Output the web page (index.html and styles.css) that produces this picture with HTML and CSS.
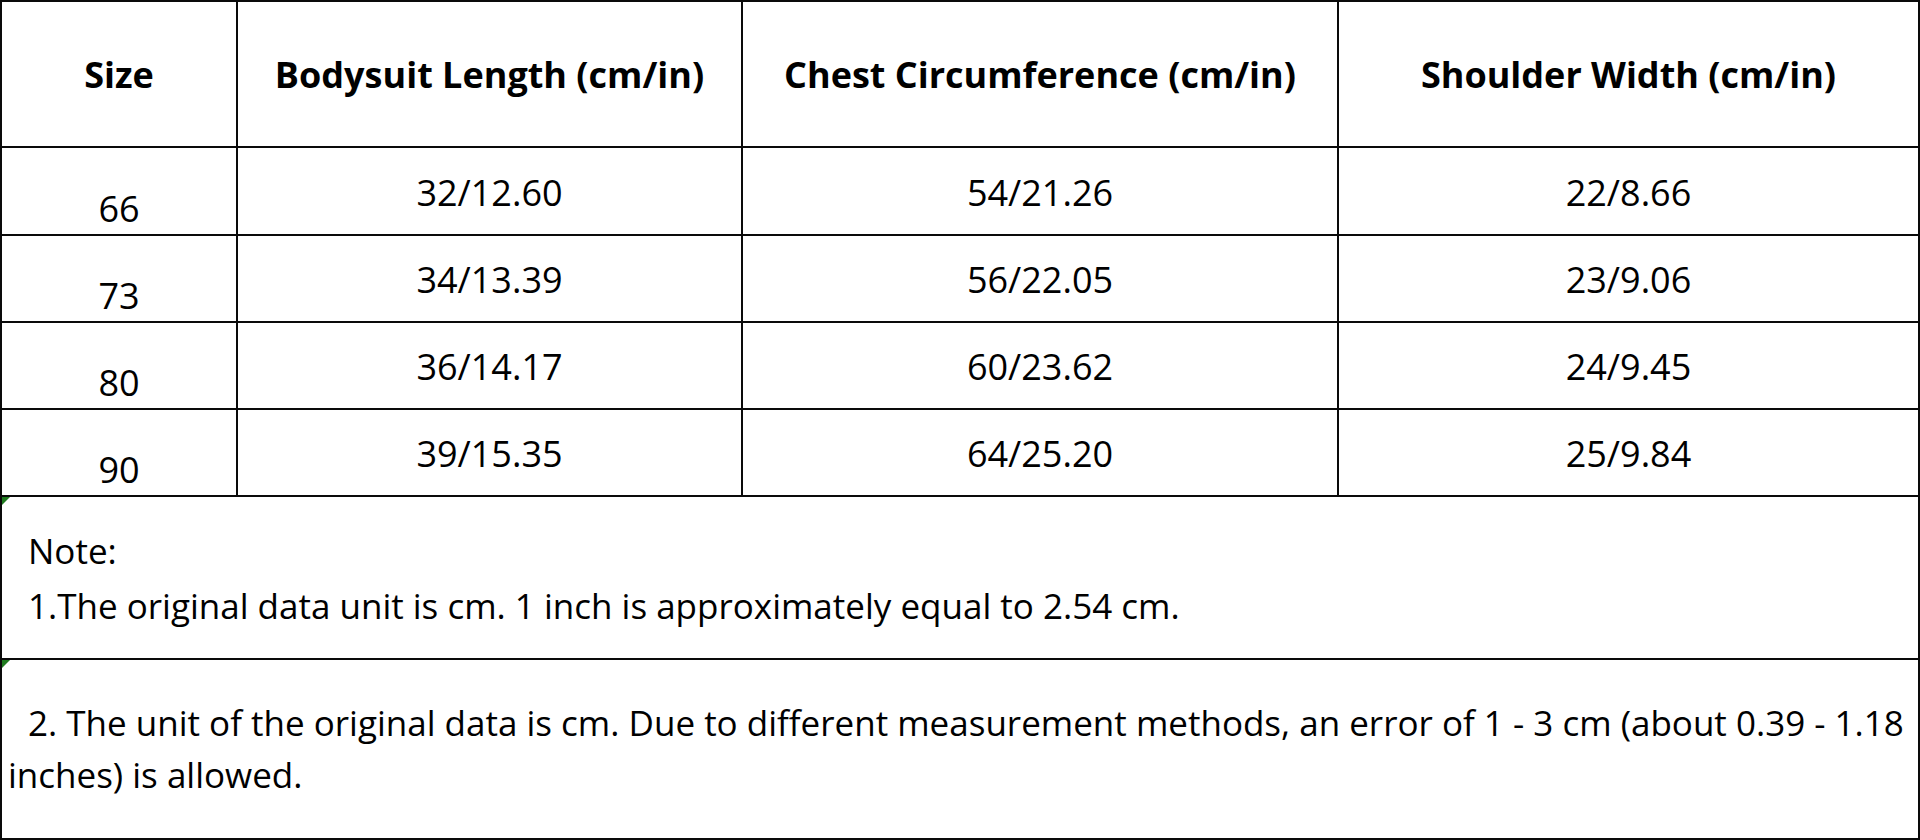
FILE: index.html
```html
<!DOCTYPE html>
<html lang="en">
<head>
<meta charset="utf-8">
<title>Size Chart</title>
<link rel="stylesheet" href="styles.css">
</head>
<body>
<div class="chart">
  <div class="cell head">Size</div>
  <div class="cell head">Bodysuit Length (cm/in)</div>
  <div class="cell head">Chest Circumference (cm/in)</div>
  <div class="cell head">Shoulder Width (cm/in)</div>

  <div class="cell size">66</div>
  <div class="cell val">32/12.60</div>
  <div class="cell val">54/21.26</div>
  <div class="cell val">22/8.66</div>

  <div class="cell size">73</div>
  <div class="cell val">34/13.39</div>
  <div class="cell val">56/22.05</div>
  <div class="cell val">23/9.06</div>

  <div class="cell size">80</div>
  <div class="cell val">36/14.17</div>
  <div class="cell val">60/23.62</div>
  <div class="cell val">24/9.45</div>

  <div class="cell size">90</div>
  <div class="cell val">39/15.35</div>
  <div class="cell val">64/25.20</div>
  <div class="cell val">25/9.84</div>

  <div class="cell note note-one">
    <p class="note-line">Note:</p>
    <p class="note-line">1.The original data unit is cm. 1 inch is approximately equal to 2.54 cm.</p>
  </div>
  <div class="cell note note-two">
    <p class="note-text">2. The unit of the original data is cm. Due to different measurement methods, an error of 1 - 3 cm (about 0.39 - 1.18<br>inches) is allowed.</p>
  </div>
</div>
</body>
</html>
```
FILE: styles.css
```css
html, body {
  margin: 0;
  padding: 0;
  background: #ffffff;
}

body {
  width: 1920px;
  height: 840px;
  overflow: hidden;
  font-family: "Open Sans", "Noto Sans", "DejaVu Sans", sans-serif;
  color: #000000;
}

.chart {
  box-sizing: border-box;
  width: 1920px;
  height: 840px;
  padding: 2px;
  display: grid;
  grid-template-columns: 234px 503px 594px 1fr;
  grid-template-rows: 144px 86px 85px 85px 85px 161px 178px;
  gap: 2px;
  background: #0a0a0a;
}

.cell {
  background: #ffffff;
  display: flex;
  justify-content: center;
  align-items: center;
  position: relative;
}

.head {
  font-weight: 700;
  font-size: 36px;
}

.val {
  font-size: 36px;
  padding-top: 2px;
}

.size {
  font-size: 36px;
  align-items: flex-end;
  padding-bottom: 1px;
}

.note {
  grid-column: 1 / -1;
  flex-direction: column;
  justify-content: center;
  align-items: stretch;
}

.note::before {
  content: "";
  position: absolute;
  left: 0;
  top: 0;
  width: 0;
  height: 0;
  border-top: 8px solid #1f7a1f;
  border-right: 8px solid transparent;
}

.note-one {
  padding-left: 26px;
  font-size: 35px;
}

.note-line {
  margin: 0;
  line-height: 55px;
  white-space: nowrap;
}

.note-two {
  padding-left: 6px;
  font-size: 35px;
}

.note-text {
  margin: 0;
  line-height: 52px;
  text-indent: 20px;
  white-space: nowrap;
}
```
